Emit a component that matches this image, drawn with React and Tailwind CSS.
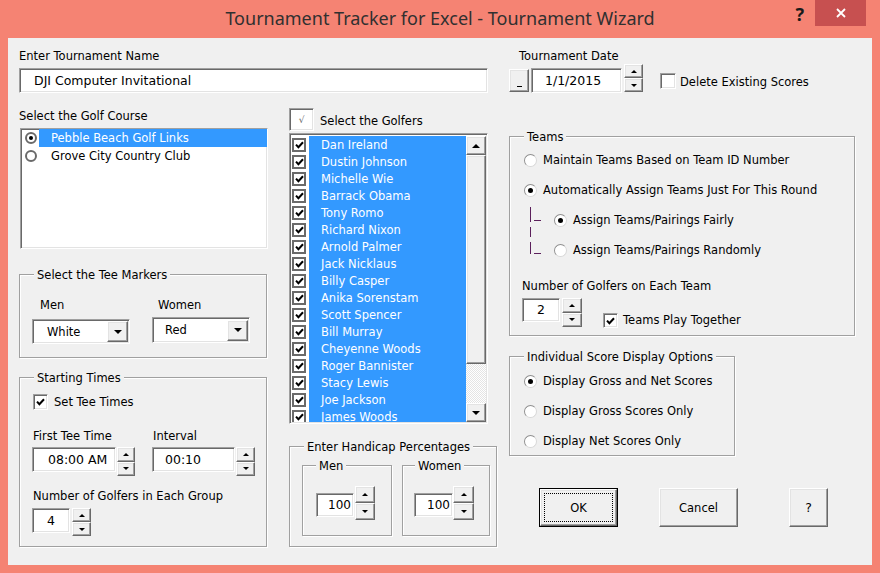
import React from "react";

const SUNKEN =
  "border border-t-[#a0a0a0] border-l-[#a0a0a0] border-r-white border-b-white shadow-[inset_1px_1px_0_#696969,inset_-1px_-1px_0_#e3e3e3] bg-white";
const RAISED =
  "border border-t-white border-l-white border-r-[#696969] border-b-[#696969] shadow-[inset_-1px_-1px_0_#a0a0a0,inset_1px_1px_0_#e3e3e3] bg-[#f0f0f0]";

function TriUp({ big }) {
  return big ? (
    <span className="block w-0 h-0 border-x-[4px] border-x-transparent border-b-[4px] border-b-black" />
  ) : (
    <span className="block w-0 h-0 border-x-[3px] border-x-transparent border-b-[3px] border-b-black" />
  );
}
function TriDown({ big }) {
  return big ? (
    <span className="block w-0 h-0 border-x-[4px] border-x-transparent border-t-[4px] border-t-black" />
  ) : (
    <span className="block w-0 h-0 border-x-[3px] border-x-transparent border-t-[3px] border-t-black" />
  );
}

function Spin({ className }) {
  return (
    <div className={"flex flex-col shrink-0 " + className}>
      <div className={RAISED + " flex-1 flex items-center justify-center"}>
        <TriUp />
      </div>
      <div className={RAISED + " flex-1 flex items-center justify-center"}>
        <TriDown />
      </div>
    </div>
  );
}

function Tick() {
  return (
    <svg width="9" height="8" viewBox="0 0 9 8" className="block">
      <polyline points="1,3.6 3.4,6.2 8,1.2" fill="none" stroke="#000" strokeWidth="2" />
    </svg>
  );
}

function Check({ checked, className }) {
  return (
    <span className={SUNKEN + " flex items-center justify-center shrink-0 " + className}>
      {checked && <Tick />}
    </span>
  );
}

function Radio({ checked }) {
  return (
    <span className="w-[13px] h-[13px] rounded-full bg-white border border-t-[#8f8f8f] border-l-[#8f8f8f] border-r-[#d8d8d8] border-b-[#d8d8d8] flex items-center justify-center shrink-0">
      {checked && <span className="w-[5px] h-[5px] rounded-full bg-black" />}
    </span>
  );
}

function Frame({ label, labelLeft, className, children }) {
  return (
    <div
      className={
        "relative border border-[#a0a0a0] shadow-[inset_1px_1px_0_#ffffff,1px_1px_0_#ffffff] " + className
      }
    >
      <span
        className={
          "absolute -top-[7px] h-[14px] leading-[14px] px-[3px] bg-[#f0f0f0] whitespace-nowrap " + labelLeft
        }
      >
        {label}
      </span>
      {children}
    </div>
  );
}

function Combo({ value, className, pad }) {
  return (
    <div className={SUNKEN + " w-[98px] flex items-center justify-between pr-[1px] " + className}>
      <span className={pad}>{value}</span>
      <div className={RAISED + " w-[21px] h-[21px] flex items-center justify-center"}>
        <TriDown big />
      </div>
    </div>
  );
}

function Row({ checked, children }) {
  return (
    <div className="flex items-center h-[30px]">
      <Radio checked={checked} />
      <span className="ml-[6px] whitespace-nowrap">{children}</span>
    </div>
  );
}

const golfers = [
  "Dan Ireland",
  "Dustin Johnson",
  "Michelle Wie",
  "Barrack Obama",
  "Tony Romo",
  "Richard Nixon",
  "Arnold Palmer",
  "Jack Nicklaus",
  "Billy Casper",
  "Anika Sorenstam",
  "Scott Spencer",
  "Bill Murray",
  "Cheyenne Woods",
  "Roger Bannister",
  "Stacy Lewis",
  "Joe Jackson",
  "James Woods",
];

export default function App() {
  return (
    <div className="w-[880px] h-[573px] bg-[#f58373] flex flex-col overflow-hidden">
      {/* Title bar */}
      <div className="h-[38px] grid grid-cols-[1fr_auto_1fr] shrink-0">
        <div />
        <div className="flex items-center font-['Noto_Sans',sans-serif] text-[18px] text-[#303030] pb-[1px]">
          Tournament Tracker for Excel - Tournament Wizard
        </div>
        <div className="flex justify-end items-start pr-[14px]">
          <span className="mt-[3px] mr-[11px] font-['Noto_Sans',sans-serif] font-bold text-[18px] leading-[22px] text-[#1a1a1a]">
            ?
          </span>
          <div className="w-[51px] h-[26px] bg-[#c75050] flex items-center justify-center">
            <svg width="10" height="10" viewBox="0 0 10 10">
              <path d="M1 1 L9 9 M9 1 L1 9" stroke="#fff" strokeWidth="1.8" />
            </svg>
          </div>
        </div>
      </div>

      {/* Content */}
      <div className="mx-[8px] h-[527px] bg-[#f0f0f0] pl-[11px] font-['DejaVu_Sans',sans-serif] text-[11.5px] leading-[14px] text-black">
        {/* Top row */}
        <div className="flex pt-[11px]">
          <div className="w-[469px]">
            <div>Enter Tournament Name</div>
            <div className={SUNKEN + " mt-[5px] h-[25px] flex items-center pl-[14px] text-[12.5px]"}>
              DJI Computer Invitational
            </div>
          </div>
          <div className="ml-[21px]">
            <div className="pl-[10px]">Tournament Date</div>
            <div className="mt-[1px] flex items-start">
              <div className={RAISED + " mt-[5px] w-[20px] h-[23px] flex items-end justify-center pb-[2px]"}>
                <span className="block w-[5px] h-[1px] bg-black mb-[2px]" />
              </div>
              <div className={SUNKEN + " ml-[2px] mt-[4px] w-[91px] h-[25px] flex items-center pl-[13px] text-[12.5px]"}>
                1/1/2015
              </div>
              <Spin className="ml-[2px] w-[19px] h-[28px]" />
              <Check className="ml-[17px] mt-[9px] w-[16px] h-[16px]" />
              <span className="ml-[4px] mt-[11px] whitespace-nowrap">Delete Existing Scores</span>
            </div>
          </div>
        </div>

        {/* Main row */}
        <div className="flex">
          {/* Column 1 */}
          <div className="w-[249px] pt-[16px]">
            <div>Select the Golf Course</div>
            <div className={SUNKEN + " mt-[5px] ml-[1px] w-[248px] h-[121px]"}>
              <div className="flex h-[18px]">
                <div className="w-[18px] pl-[4px] flex items-center">
                  <span className="w-[12px] h-[12px] rounded-full border-2 border-[#6a6a6a] bg-white flex items-center justify-center">
                    <span className="w-[4px] h-[4px] rounded-full bg-black" />
                  </span>
                </div>
                <div className="flex-1 bg-[#3399ff] text-white pl-[12px] flex items-center">
                  Pebble Beach Golf Links
                </div>
              </div>
              <div className="flex h-[17px]">
                <div className="w-[18px] pl-[4px] flex items-center">
                  <span className="w-[12px] h-[12px] rounded-full border-2 border-[#6a6a6a] bg-white" />
                </div>
                <div className="flex-1 pl-[12px] flex items-center">Grove City Country Club</div>
              </div>
            </div>

            <Frame
              label="Select the Tee Markers"
              labelLeft="left-[14px]"
              className="mt-[25px] w-[248px] h-[84px] flex pt-[23px] pl-[12px]"
            >
              <div>
                <div className="pl-[8px]">Men</div>
                <Combo value="White" className="mt-[7px] h-[25px]" pad="pl-[14px]" />
              </div>
              <div className="ml-[22px]">
                <div className="pl-[6px]">Women</div>
                <Combo value="Red" className="mt-[5px] h-[26px]" pad="pl-[12px]" />
              </div>
            </Frame>

            <Frame
              label="Starting Times"
              labelLeft="left-[14px]"
              className="mt-[19px] w-[248px] h-[170px] pt-[16px] pl-[12px]"
            >
              <div className="flex items-center ml-[1px]">
                <Check checked className="w-[15px] h-[16px]" />
                <span className="ml-[6px]">Set Tee Times</span>
              </div>
              <div className="flex mt-[19px]">
                <div>
                  <div className="ml-[1px]">First Tee Time</div>
                  <div className="flex items-start mt-[4px]">
                    <div className={SUNKEN + " w-[84px] h-[25px] flex items-center pl-[15px] text-[12.5px]"}>
                      08:00 AM
                    </div>
                    <Spin className="ml-[1px] w-[18px] h-[29px]" />
                  </div>
                </div>
                <div className="ml-[17px]">
                  <div className="ml-[1px]">Interval</div>
                  <div className="flex items-start mt-[4px]">
                    <div className={SUNKEN + " w-[83px] h-[25px] flex items-center pl-[12px] text-[12.5px]"}>
                      00:10
                    </div>
                    <Spin className="ml-[1px] w-[19px] h-[29px]" />
                  </div>
                </div>
              </div>
              <div className="mt-[13px] ml-[1px]">Number of Golfers in Each Group</div>
              <div className="flex items-start mt-[5px]">
                <div className={SUNKEN + " w-[38px] h-[25px] flex items-center pl-[14px] text-[12.5px]"}>4</div>
                <Spin className="ml-[2px] w-[19px] h-[28px]" />
              </div>
            </Frame>
          </div>

          {/* Column 2 */}
          <div className="ml-[21px] w-[208px] pt-[15px]">
            <div className="flex items-center h-[23px]">
              <div className={SUNKEN + " w-[25px] h-[23px] flex items-center justify-center text-[9px] text-[#666] bg-[#fafafa]"}>
                √
              </div>
              <span className="ml-[6px] pt-[2px]">Select the Golfers</span>
            </div>
            <div className={SUNKEN + " mt-[2px] w-[199px] h-[291px] p-[1px] flex"}>
              <div className="w-[175px] overflow-hidden pt-[1px] flex flex-col">
                {golfers.map((n) => (
                  <div key={n} className="flex h-[17px] shrink-0">
                    <div className="w-[18px] bg-white flex items-center pl-[1px]">
                      <span className="w-[14px] h-[14px] border-2 border-[#6a6a6a] bg-white flex items-center justify-center">
                        <Tick />
                      </span>
                    </div>
                    <div className="flex-1 bg-[#3399ff] text-white pl-[12px] flex items-center whitespace-nowrap">
                      {n}
                    </div>
                  </div>
                ))}
              </div>
              <div className="w-[20px] flex flex-col pt-[1px]">
                <div className={RAISED + " h-[19px] flex items-center justify-center"}>
                  <TriUp big />
                </div>
                <div className={RAISED + " h-[209px]"} />
                <div className="flex-1 bg-[repeating-conic-gradient(#ffffff_0%_25%,#e4e4e4_0%_50%)] bg-[length:2px_2px]" />
                <div className={RAISED + " h-[19px] flex items-center justify-center"}>
                  <TriDown big />
                </div>
              </div>
            </div>

            <Frame
              label="Enter Handicap Percentages"
              labelLeft="left-[14px]"
              className="mt-[22px] w-[208px] h-[101px] flex pt-[18px] pl-[12px]"
            >
              <Frame label="Men" labelLeft="left-[13px]" className="w-[90px] h-[71px] pt-[20px] pl-[13px]">
                <div className="flex items-start">
                  <div className={SUNKEN + " mt-[7px] w-[38px] h-[24px] flex items-center pl-[11px] text-[12px]"}>
                    100
                  </div>
                  <Spin className="ml-[1px] w-[20px] h-[34px]" />
                </div>
              </Frame>
              <Frame label="Women" labelLeft="left-[12px]" className="ml-[10px] w-[88px] h-[71px] pt-[20px] pl-[11px]">
                <div className="flex items-start">
                  <div className={SUNKEN + " mt-[7px] w-[39px] h-[24px] flex items-center pl-[12px] text-[12px]"}>
                    100
                  </div>
                  <Spin className="w-[21px] h-[34px]" />
                </div>
              </Frame>
            </Frame>
          </div>

          {/* Column 3 */}
          <div className="ml-[12px] pt-[43px]">
            <Frame label="Teams" labelLeft="left-[14px]" className="w-[346px] h-[200px] pt-[8px] pl-[12px]">
              <div className="ml-[2px]">
                <Row>Maintain Teams Based on Team ID Number</Row>
                <Row checked>Automatically Assign Teams Just For This Round</Row>
                <div className="flex">
                  <svg width="12" height="60" viewBox="0 0 12 60" className="ml-[5px] shrink-0">
                    <path
                      d="M1.5 2 V17 M1.5 22 V32 M1.5 37 V49 M5 15.5 H12 M5 48.5 H12"
                      stroke="#5b1f5b"
                      strokeWidth="1"
                      fill="none"
                    />
                  </svg>
                  <div className="ml-[13px]">
                    <Row checked>Assign Teams/Pairings Fairly</Row>
                    <Row>Assign Teams/Pairings Randomly</Row>
                  </div>
                </div>
              </div>
              <div className="mt-[14px]">Number of Golfers on Each Team</div>
              <div className="flex items-start mt-[5px]">
                <div className={SUNKEN + " w-[38px] h-[24px] flex items-center pl-[14px] text-[12.5px]"}>2</div>
                <Spin className="ml-[2px] w-[20px] h-[29px]" />
                <Check checked className="ml-[21px] mt-[15px] w-[15px] h-[15px]" />
                <span className="ml-[5px] mt-[15px] whitespace-nowrap">Teams Play Together</span>
              </div>
            </Frame>

            <Frame
              label="Individual Score Display Options"
              labelLeft="left-[14px]"
              className="mt-[20px] w-[226px] h-[100px] pt-[9px] pl-[14px]"
            >
              <Row checked>Display Gross and Net Scores</Row>
              <Row>Display Gross Scores Only</Row>
              <Row>Display Net Scores Only</Row>
            </Frame>

            <div className="flex mt-[32px]">
              <div className="ml-[30px] w-[79px] h-[39px] border border-black">
                <div className={RAISED + " w-full h-full p-[3px]"}>
                  <div className="w-full h-full border border-dotted border-black flex items-center justify-center">
                    OK
                  </div>
                </div>
              </div>
              <div className={RAISED + " ml-[41px] w-[79px] h-[39px] flex items-center justify-center"}>Cancel</div>
              <div className={RAISED + " ml-[51px] w-[39px] h-[39px] flex items-center justify-center text-[12.5px]"}>
                ?
              </div>
            </div>
          </div>
        </div>
      </div>
    </div>
  );
}
